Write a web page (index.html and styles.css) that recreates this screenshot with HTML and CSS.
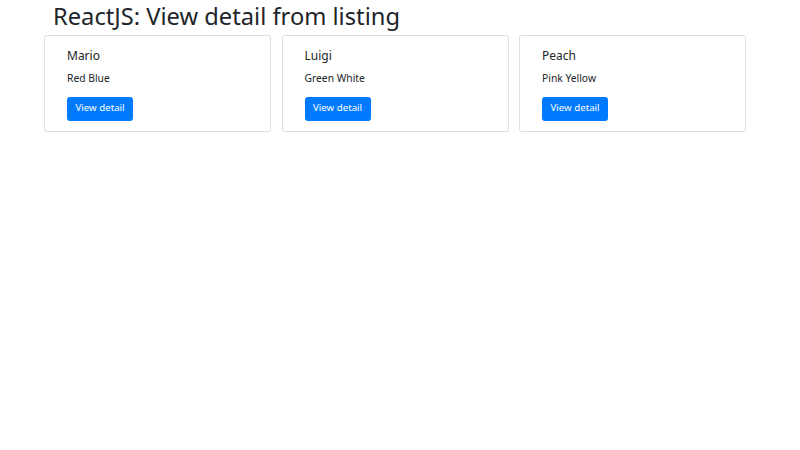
FILE: index.html
```html
<!DOCTYPE html>
<html>
<head>
<meta charset="utf-8">
<link rel="stylesheet" href="styles.css">
</head>
<body>
<div class="page">
  <h1 class="title">ReactJS: View detail from listing</h1>
  <div class="cards">
    <div class="card">
      <h5 class="card-title">Mario</h5>
      <p class="card-text">Red Blue</p>
      <a class="btn">View detail</a>
    </div>
    <div class="card">
      <h5 class="card-title">Luigi</h5>
      <p class="card-text">Green White</p>
      <a class="btn">View detail</a>
    </div>
    <div class="card">
      <h5 class="card-title">Peach</h5>
      <p class="card-text">Pink Yellow</p>
      <a class="btn">View detail</a>
    </div>
  </div>
</div>
</body>
</html>
```
FILE: styles.css
```css
html, body {
  margin: 0;
  padding: 0;
  background: #fff;
}
body {
  font-family: "Noto Sans", "Open Sans", sans-serif;
  color: #212529;
}
.page {
  padding-left: 44px;
}
.title {
  margin: 1.5px 0 5px 0;
  padding-left: 9px;
  font-size: 23.7px;
  font-weight: 400;
  line-height: 1.2;
}
.cards {
  width: 702px;
  display: grid;
  grid-template-columns: repeat(3, 1fr);
  column-gap: 10.5px;
}
.card {
  border: 1px solid rgba(0,0,0,.125);
  border-radius: 2.5px;
  padding: 13.5px 12px 10px 22px;
}
.card-title {
  margin: 0 0 7px 0;
  font-size: 12px;
  font-weight: 400;
  line-height: 1.2;
}
.card-text {
  margin: 0 0 8px 0;
  font-size: 10.3px;
  line-height: 1.5;
}
.btn {
  display: inline-block;
  font-size: 9.7px;
  line-height: 1.5;
  padding: 3.7px 7.5px;
  border: 1px solid #007bff;
  background: #007bff;
  color: #fff;
  border-radius: 2.5px;
}
```
